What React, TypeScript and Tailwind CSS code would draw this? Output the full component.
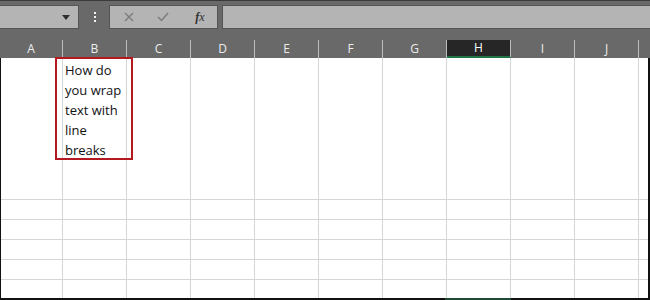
const cols = ['A', 'B', 'C', 'D', 'E', 'F', 'G', 'H', 'I', 'J']

const Sheet = () => {
    return (
        <div className="w-[650px] h-[300px] overflow-hidden bg-[#696969] flex flex-col border-t border-[#3a3a3a]" style={{ fontFamily: '"Open Sans", "Liberation Sans", sans-serif' }}>
            {/* Formula bar */}
            <div className="h-[28px] pt-[4px] flex items-start">
                <div className="w-[79px] h-[24px] bg-[#b4b4b4] border-y border-r border-[#555] flex items-center justify-end pr-[8px]">
                    <svg width="8" height="5" viewBox="0 0 8 5">
                        <path d="M0 0 L8 0 L4 5 Z" fill="#2e2e2e" />
                    </svg>
                </div>
                <div className="w-[30px] h-[24px] flex flex-col items-center justify-center gap-[2px] pl-[1px]">
                    <span className="w-[2px] h-[2px] bg-[#f2f2f2]" />
                    <span className="w-[2px] h-[2px] bg-[#f2f2f2]" />
                    <span className="w-[2px] h-[2px] bg-[#f2f2f2]" />
                </div>
                <div className="w-[109px] h-[24px] bg-[#b4b4b4] border border-[#555] flex items-center">
                    <div className="w-[36px] flex justify-center pl-[2px]">
                        <svg width="10" height="10" viewBox="0 0 10 10">
                            <path d="M1 1 L9 9 M9 1 L1 9" stroke="#7c7c7c" strokeWidth="1.4" />
                        </svg>
                    </div>
                    <div className="w-[34px] flex justify-center">
                        <svg width="12" height="10" viewBox="0 0 12 10">
                            <path d="M1 5 L4.5 8.5 L11 1" stroke="#7c7c7c" strokeWidth="1.5" fill="none" />
                        </svg>
                    </div>
                    <div className="flex-1 flex justify-center pl-[3px]">
                        <span className="text-[12px] italic text-[#303030] leading-none" style={{ fontFamily: '"Liberation Serif", serif' }}>
                            <span className="font-bold">f</span>x
                        </span>
                    </div>
                </div>
                <div className="ml-[4px] flex-1 h-[24px] bg-[#b4b4b4] border-y border-l border-[#555]" />
            </div>

            {/* Column headers */}
            <div className="h-[29px] flex items-end">
                {cols.map((c, i) => (
                    <div
                        key={c}
                        className={
                            (i === 0 ? 'w-[63px] ' : 'w-[64px] ') +
                            'h-[18px] flex items-center justify-center border-r border-[#bdbdbd] text-[12px] leading-none ' +
                            (c === 'H' ? 'bg-[#262626] text-white border-b-2 border-b-[#217346]' : 'text-[#ececec]')
                        }
                    >
                        {c}
                    </div>
                ))}
                <div className="flex-1 h-[18px]" />
            </div>

            {/* Grid */}
            <div className="flex-1 bg-white border-l border-r-2 border-[#111] flex flex-col relative">
                <div className="h-[142px] flex border-b border-[#d6d6d6]">
                    {cols.map((c, i) => (
                        <div key={c} className={(i === 0 ? 'w-[62px] ' : 'w-[64px] ') + 'border-r border-[#d6d6d6]'}>
                            {c === 'B' && (
                                <div className="pl-[2px] pt-[2px] text-[13px] leading-[20px] text-[#111]" style={{ fontFamily: '"Open Sans", sans-serif' }}>
                                    How do<br />you wrap<br />text with<br />line<br />breaks
                                </div>
                            )}
                        </div>
                    ))}
                </div>
                {[0, 1, 2, 3, 4].map((r) => (
                    <div key={r} className={(r === 4 ? 'flex-1 ' : 'h-[20px] border-b border-[#d6d6d6] ') + 'flex'}>
                        {cols.map((c, i) => (
                            <div key={c} className={(i === 0 ? 'w-[62px] ' : 'w-[64px] ') + 'border-r border-[#d6d6d6]'} />
                        ))}
                    </div>
                ))}
                <div className="h-[2px] flex">
                    <div className="w-[444px] bg-[#111]" />
                    <div className="w-[66px] bg-[#1f4a35]" />
                    <div className="flex-1 bg-[#111]" />
                </div>

                {/* annotation box */}
                <div className="absolute left-[54px] top-[-1px] w-[78px] h-[103px] border-2 border-[#b3191f]" />
            </div>
        </div>
    )
}

export default function App() {
    return <Sheet />
}
